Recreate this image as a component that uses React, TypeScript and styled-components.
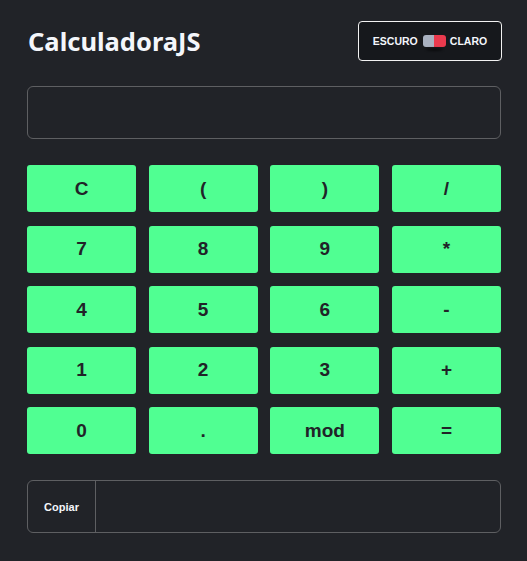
import React from "react";
import styled, { createGlobalStyle } from "styled-components";

const Global = createGlobalStyle`
  html, body { margin: 0; padding: 0; background: #212328; }
  body { font-family: "Liberation Sans", Arial, sans-serif; }
`;

const Page = styled.div`
  width: 474px;
  margin: 0 auto 0 27px;
  padding-top: 21px;
  display: flex;
  flex-direction: column;
`;

const Header = styled.header`
  display: flex;
  align-items: center;
  justify-content: space-between;
  height: 40px;
`;

const Title = styled.h1`
  margin: 0 0 0 1px;
  font-family: "Noto Sans", "Open Sans", sans-serif;
  font-weight: 700;
  font-size: 25.5px;
  letter-spacing: 0px;
  color: #f4f6fb;
`;

const ThemeButton = styled.button`
  display: flex;
  align-items: center;
  gap: 5px;
  height: 40px;
  width: 144px;
  box-sizing: border-box;
  padding: 0;
  justify-content: center;
  background: #16181c;
  border: 1px solid #f2f2f2;
  border-radius: 4px;
  color: #f4f6fb;
  font-family: "Liberation Sans", Arial, sans-serif;
  font-weight: 700;
  font-size: 10.5px;
  margin-right: -1px;
`;

const Switch = styled.span`
  position: relative;
  display: flex;
  flex-shrink: 0;
  width: 23px;
  height: 12px;
  margin-right: -1px;
  border-radius: 3px;
  &::after {
    content: "";
    position: absolute;
    left: 3px;
    right: 3px;
    bottom: -4px;
    height: 3px;
    border-radius: 50%;
    background: rgba(0, 0, 0, 0.55);
    filter: blur(1px);
  }
`;

const Half = styled.span<{ $c: string; $side: "l" | "r" }>`
  flex: 1;
  background: ${(p) => p.$c};
  border-radius: ${(p) => (p.$side === "l" ? "3px 0 0 3px" : "0 3px 3px 0")};
`;

const Display = styled.div`
  margin-top: 25px;
  height: 53px;
  box-sizing: border-box;
  border: 1px solid #5e5f62;
  border-radius: 6px;
  background: #212328;
`;

const Keypad = styled.div`
  margin-top: 26px;
  display: grid;
  grid-template-columns: repeat(4, 109px);
  justify-content: space-between;
  row-gap: 13.5px;
`;

const Key = styled.button`
  height: 47px;
  border: none;
  border-radius: 3px;
  background: #50ff92;
  color: #212328;
  font-family: "Liberation Sans", Arial, sans-serif;
  font-weight: 700;
  font-size: 19px;
  padding: 0;
`;

const CopyBox = styled.div`
  margin-top: 26px;
  height: 53px;
  box-sizing: border-box;
  border: 1px solid #5e5f62;
  border-radius: 6px;
  display: flex;
`;

const CopyButton = styled.button`
  width: 68px;
  background: transparent;
  border: none;
  border-right: 1px solid #5e5f62;
  color: #f4f6fb;
  font-family: "Liberation Sans", Arial, sans-serif;
  font-weight: 700;
  font-size: 11px;
  padding: 0;
`;

const keys = ["C", "(", ")", "/", "7", "8", "9", "*", "4", "5", "6", "-", "1", "2", "3", "+", "0", ".", "mod", "="];

export default function App() {
  return (
    <>
      <Global />
      <Page>
        <Header>
          <Title>CalculadoraJS</Title>
          <ThemeButton>
            ESCURO
            <Switch>
              <Half $c="#a9b1c0" $side="l" />
              <Half $c="#ea3a4e" $side="r" />
            </Switch>
            CLARO
          </ThemeButton>
        </Header>
        <Display />
        <Keypad>
          {keys.map((k) => (
            <Key key={k}>{k}</Key>
          ))}
        </Keypad>
        <CopyBox>
          <CopyButton>Copiar</CopyButton>
        </CopyBox>
      </Page>
    </>
  );
}
